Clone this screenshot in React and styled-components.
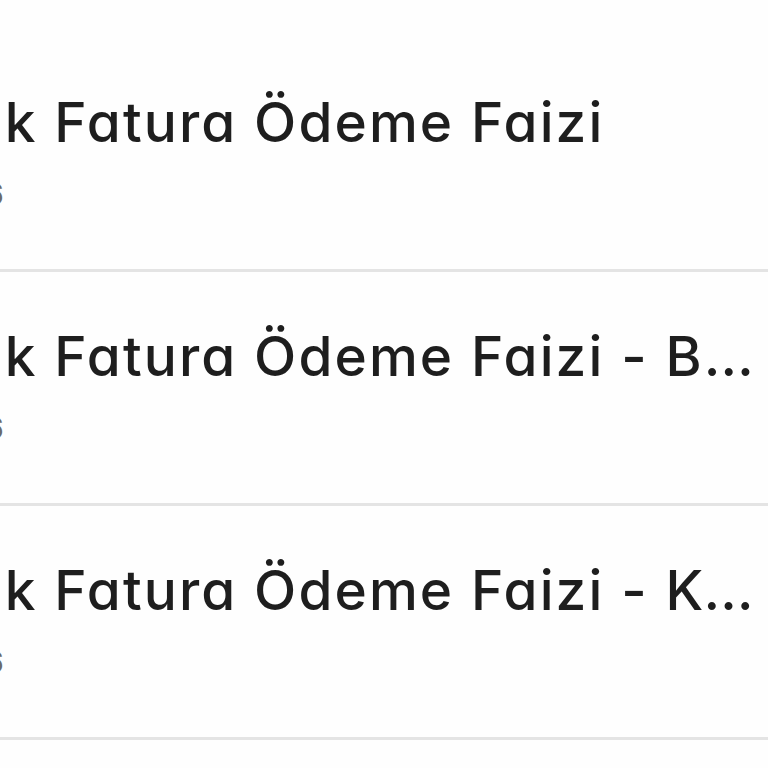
import React from "react";
import styled, { createGlobalStyle } from "styled-components";

const Global = createGlobalStyle`
  html, body { margin: 0; padding: 0; background: #fefefe; }
  body { font-family: Inter, "Noto Sans", sans-serif; overflow: hidden; }
`;

const List = styled.ul`
  list-style: none;
  margin: 38px 0 0 0;
  padding: 0;
  width: 768px;
`;

const Row = styled.li`
  box-sizing: border-box;
  height: 234px;
  border-bottom: 3px solid #e4e4e4;
  padding: 51px 4px 0 0;
  overflow: hidden;
`;

const Content = styled.div`
  margin-left: -219px;
  display: flex;
  flex-direction: column;
  align-items: flex-start;
  gap: 19px;
  min-width: 0;
`;

const Title = styled.div`
  font-size: 55px;
  font-weight: 500;
  letter-spacing: 2.1px;
  line-height: 66px;
  color: #1e1e1e;
  font-feature-settings: "cv11" 1;
  white-space: nowrap;
  overflow: hidden;
  text-overflow: ellipsis;
  max-width: 100%;
`;

const Subtitle = styled.div`
  font-size: 30px;
  font-weight: 400;
  letter-spacing: -0.3px;
  line-height: 40px;
  color: #6a6a6a;
  white-space: nowrap;
`;

const items = [
  { title: "Otomatik Fatura Ödeme Faizi", sub: "Aylık faiz %3,66" },
  { title: "Otomatik Fatura Ödeme Faizi - Bireysel", sub: "Aylık faiz %3,66" },
  { title: "Otomatik Fatura Ödeme Faizi - Kurumsal", sub: "Aylık faiz %3,66" },
];

export default function App() {
  return (
    <>
      <Global />
      <List>
        {items.map((it) => (
          <Row key={it.title}>
            <Content>
              <Title>{it.title}</Title>
              <Subtitle>{it.sub}</Subtitle>
            </Content>
          </Row>
        ))}
      </List>
    </>
  );
}
